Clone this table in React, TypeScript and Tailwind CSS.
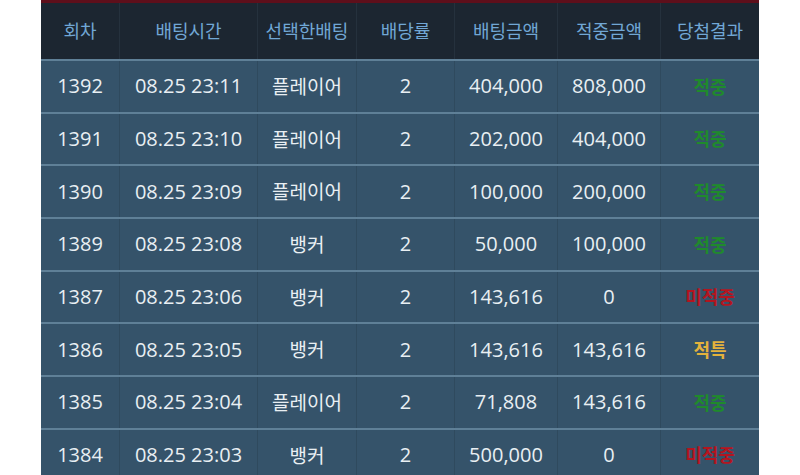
type Result = 'win' | 'lose' | 'tie';

type BetRow = {
  round: string;
  time: string;
  pick: string;
  odds: string;
  amount: string;
  payout: string;
  result: Result;
};

const rows: BetRow[] = [
  { round: '1392', time: '08.25 23:11', pick: '플레이어', odds: '2', amount: '404,000', payout: '808,000', result: 'win' },
  { round: '1391', time: '08.25 23:10', pick: '플레이어', odds: '2', amount: '202,000', payout: '404,000', result: 'win' },
  { round: '1390', time: '08.25 23:09', pick: '플레이어', odds: '2', amount: '100,000', payout: '200,000', result: 'win' },
  { round: '1389', time: '08.25 23:08', pick: '뱅커', odds: '2', amount: '50,000', payout: '100,000', result: 'win' },
  { round: '1387', time: '08.25 23:06', pick: '뱅커', odds: '2', amount: '143,616', payout: '0', result: 'lose' },
  { round: '1386', time: '08.25 23:05', pick: '뱅커', odds: '2', amount: '143,616', payout: '143,616', result: 'tie' },
  { round: '1385', time: '08.25 23:04', pick: '플레이어', odds: '2', amount: '71,808', payout: '143,616', result: 'win' },
  { round: '1384', time: '08.25 23:03', pick: '뱅커', odds: '2', amount: '500,000', payout: '0', result: 'lose' },
];

const headers = ['회차', '배팅시간', '선택한배팅', '배당률', '배팅금액', '적중금액', '당첨결과'];

const cols = 'grid grid-cols-[79px_138px_99px_98px_103px_103px_98px]';

const resultLabel: Record<Result, { text: string; cls: string }> = {
  win: { text: '적중', cls: 'text-[#1f8a2c]' },
  lose: { text: '미적중', cls: 'text-[#b3151f]' },
  tie: { text: '적특', cls: 'text-[#e3b23c]' },
};

const Cell = ({ children, className = '' }: { children: React.ReactNode; className?: string }) => (
  <div className={`flex items-center justify-center border-r border-[#2f4a5e] last:border-r-0 ${className}`}>
    {children}
  </div>
);

const App = () => {
  return (
    <div
      className="min-h-screen bg-white"
      style={{ fontFamily: '"Open Sans", "Noto Sans CJK KR", sans-serif' }}
    >
      <div className="ml-[41px] w-[718px] border-t-[3px] border-[#5e0f1b]">
        <div className={`${cols} h-[56px] bg-[#1c2631] text-[18px] text-[#71a7d5]`}>
          {headers.map((h) => (
            <div
              key={h}
              className="flex items-center justify-center border-r border-[#25313d] last:border-r-0"
            >
              {h}
            </div>
          ))}
        </div>

        {rows.map((r) => {
          const res = resultLabel[r.result];
          return (
            <div
              key={r.round}
              className={`${cols} h-[52.67px] border-t-2 border-[#5f8097] bg-[#35536a] text-[20px] text-[#e9eff3]`}
            >
              <Cell>{r.round}</Cell>
              <Cell>{r.time}</Cell>
              <Cell className="pt-[2px] text-[19px]">{r.pick}</Cell>
              <Cell>{r.odds}</Cell>
              <Cell>{r.amount}</Cell>
              <Cell>{r.payout}</Cell>
              <Cell className={`pt-[2px] text-[18px] font-bold ${res.cls}`}>{res.text}</Cell>
            </div>
          );
        })}
      </div>
    </div>
  );
};

export default App;
